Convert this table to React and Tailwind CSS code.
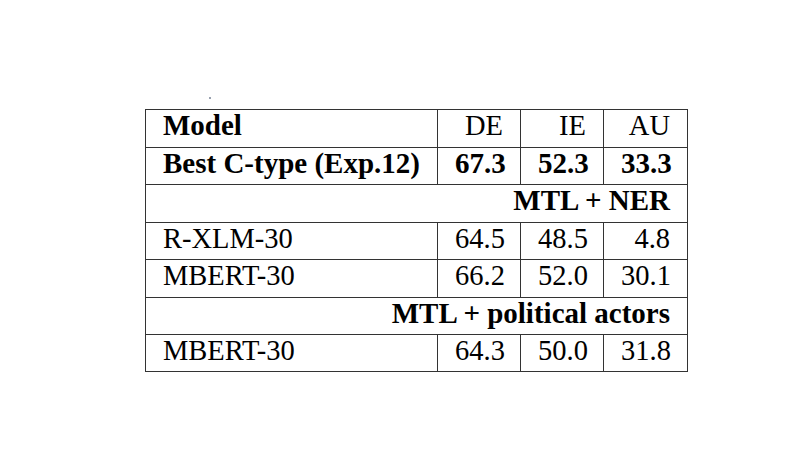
export default function App() {
  const cell = "border-r border-b border-[#333333] px-[17px] leading-[31px] text-black";
  const rows = [
    { type: "row", cells: ["Model", "DE", "IE", "AU"], bold: false, firstBold: true, h: "h-[38px]" },
    { type: "row", cells: ["Best C-type (Exp.12)", "67.3", "52.3", "33.3"], bold: true, firstBold: true, h: "h-[37px]" },
    { type: "span", text: "MTL + NER", h: "h-[38px]" },
    { type: "row", cells: ["R-XLM-30", "64.5", "48.5", "4.8"], bold: false, h: "h-[37px]" },
    { type: "row", cells: ["MBERT-30", "66.2", "52.0", "30.1"], bold: false, h: "h-[38px]" },
    { type: "span", text: "MTL + political actors", h: "h-[37px]" },
    { type: "row", cells: ["MBERT-30", "64.3", "50.0", "31.8"], bold: false, h: "h-[37px]" },
  ];
  const widths = ["w-[292px]", "w-[83px]", "w-[83px]", "w-[84px]"];
  return (
    <div className="w-[808px] h-[455px] bg-white pt-[97px] pl-[145px] font-['Liberation_Serif','Times_New_Roman',serif]">
      <div className="ml-[64px] h-[2px] w-[2px] bg-gray-400 mb-[10px]" />
      <div className="w-[543px] border-l border-t border-[#333333] text-[28.5px]">
        {rows.map((r, i) =>
          r.type === "span" ? (
            <div key={i} className={`${cell} ${r.h} w-[542px] text-right font-bold text-[29px]`}>
              {r.text}
            </div>
          ) : (
            <div key={i} className={`flex ${r.h}`}>
              {r.cells.map((c, j) => {
                const isBold = r.bold || (j === 0 && r.firstBold);
                return (
                  <div
                    key={j}
                    className={`${cell} ${widths[j]} shrink-0 whitespace-nowrap ${
                      j === 0 ? "text-left" : "text-right"
                    } ${isBold ? "font-bold text-[29px]" : "font-normal"}`}
                  >
                    {c}
                  </div>
                );
              })}
            </div>
          )
        )}
      </div>
    </div>
  );
}
